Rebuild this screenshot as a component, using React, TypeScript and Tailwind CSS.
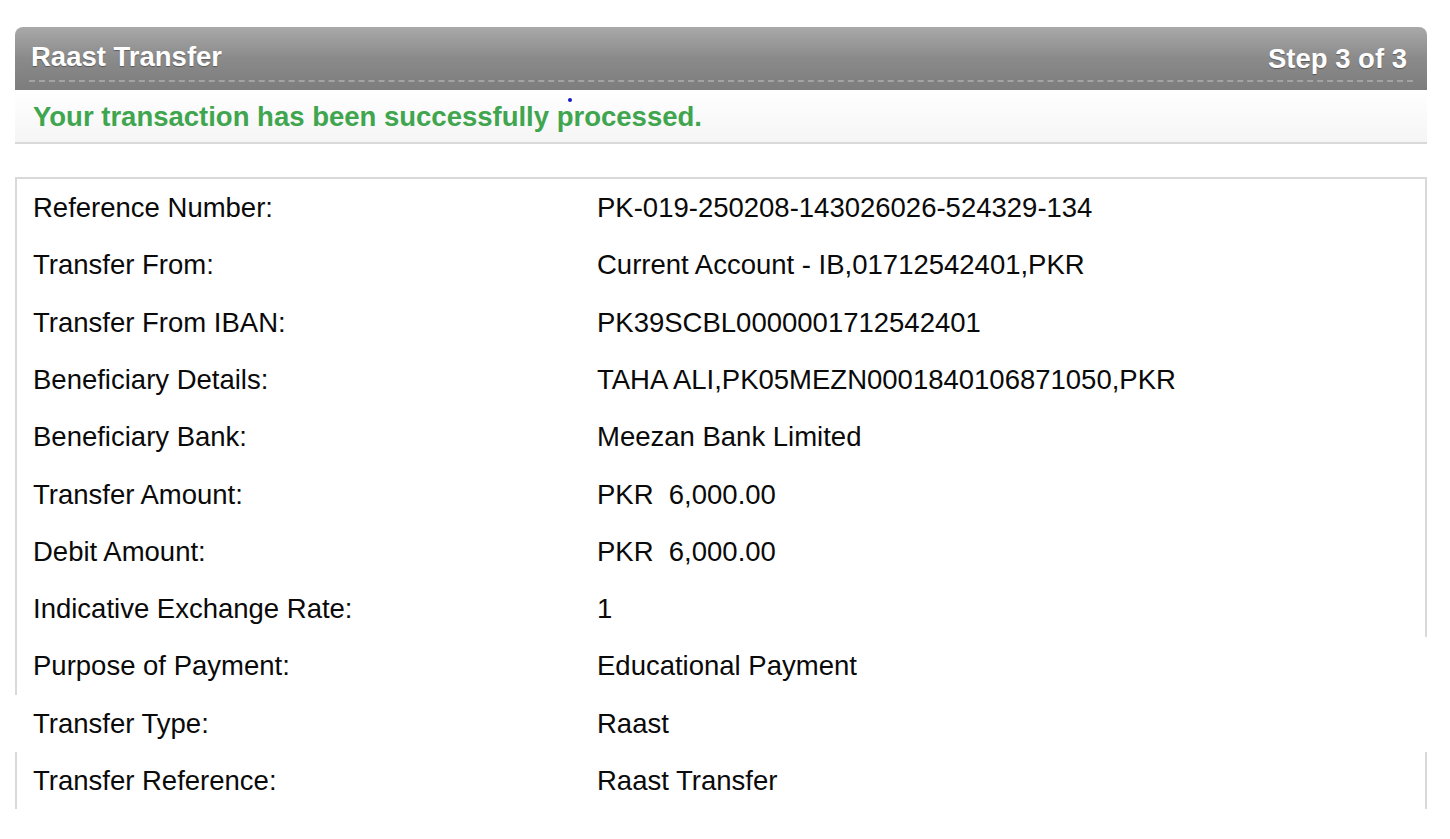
const rows: { label: string; value: string; border: "both" | "left" | "none" }[] = [
  { label: "Reference Number:", value: "PK-019-250208-143026026-524329-134", border: "both" },
  { label: "Transfer From:", value: "Current Account - IB,01712542401,PKR", border: "both" },
  { label: "Transfer From IBAN:", value: "PK39SCBL0000001712542401", border: "both" },
  { label: "Beneficiary Details:", value: "TAHA ALI,PK05MEZN0001840106871050,PKR", border: "both" },
  { label: "Beneficiary Bank:", value: "Meezan Bank Limited", border: "both" },
  { label: "Transfer Amount:", value: "PKR\u00a0\u00a06,000.00", border: "both" },
  { label: "Debit Amount:", value: "PKR\u00a0\u00a06,000.00", border: "both" },
  { label: "Indicative Exchange Rate:", value: "1", border: "both" },
  { label: "Purpose of Payment:", value: "Educational Payment", border: "left" },
  { label: "Transfer Type:", value: "Raast", border: "none" },
  { label: "Transfer Reference:", value: "Raast Transfer", border: "both" },
];

export default function App() {
  return (
    <div className="min-h-screen bg-white pt-[27px] font-['Liberation_Sans',Arial,sans-serif] text-[27.5px] text-[#0a0a0a]">
      <div className="ml-[15px] w-[1412px]">
        {/* header bar */}
        <div className="h-[63px] rounded-t-[8px] bg-gradient-to-b from-[#a9a9a9] via-[#8a8a8a] to-[#7d7d7d] px-[14px] pt-[12px]">
          <div className="flex items-start justify-between border-b-2 border-dashed border-[#a3a3a3] pb-[3px] pl-[2px] pr-[6px] font-bold text-white [text-shadow:0_1px_1px_rgba(0,0,0,0.35)]">
            <span className="leading-[36px]">Raast Transfer</span>
            <span className="mt-[2px] leading-[36px]">Step 3 of 3</span>
          </div>
        </div>

        {/* status message */}
        <div className="relative h-[54px] border-b-2 border-[#d9d9d9] bg-gradient-to-b from-white to-[#f5f5f5] pl-[18px] pt-[9px]">
          <span className="absolute left-[553px] top-[8px] h-[4px] w-[4px] rounded-full bg-[#1818c8]" />
          <p className="font-bold leading-[36px] text-[#3fa54e]">
            Your transaction has been successfully processed.
          </p>
        </div>

        {/* details */}
        <div className="mt-[33px] border-t-2 border-[#d9d9d9]">
          {rows.map((r) => (
            <div
              key={r.label}
              className={
                "flex h-[57.3px] items-center border-[#d9d9d9] " +
                (r.border === "both"
                  ? "border-x-2"
                  : r.border === "left"
                  ? "border-l-2 pr-[2px]"
                  : "px-[2px]")
              }
            >
              <div className="w-[580px] shrink-0 pl-[16px]">{r.label}</div>
              <div>{r.value}</div>
            </div>
          ))}
        </div>
      </div>
    </div>
  );
}
